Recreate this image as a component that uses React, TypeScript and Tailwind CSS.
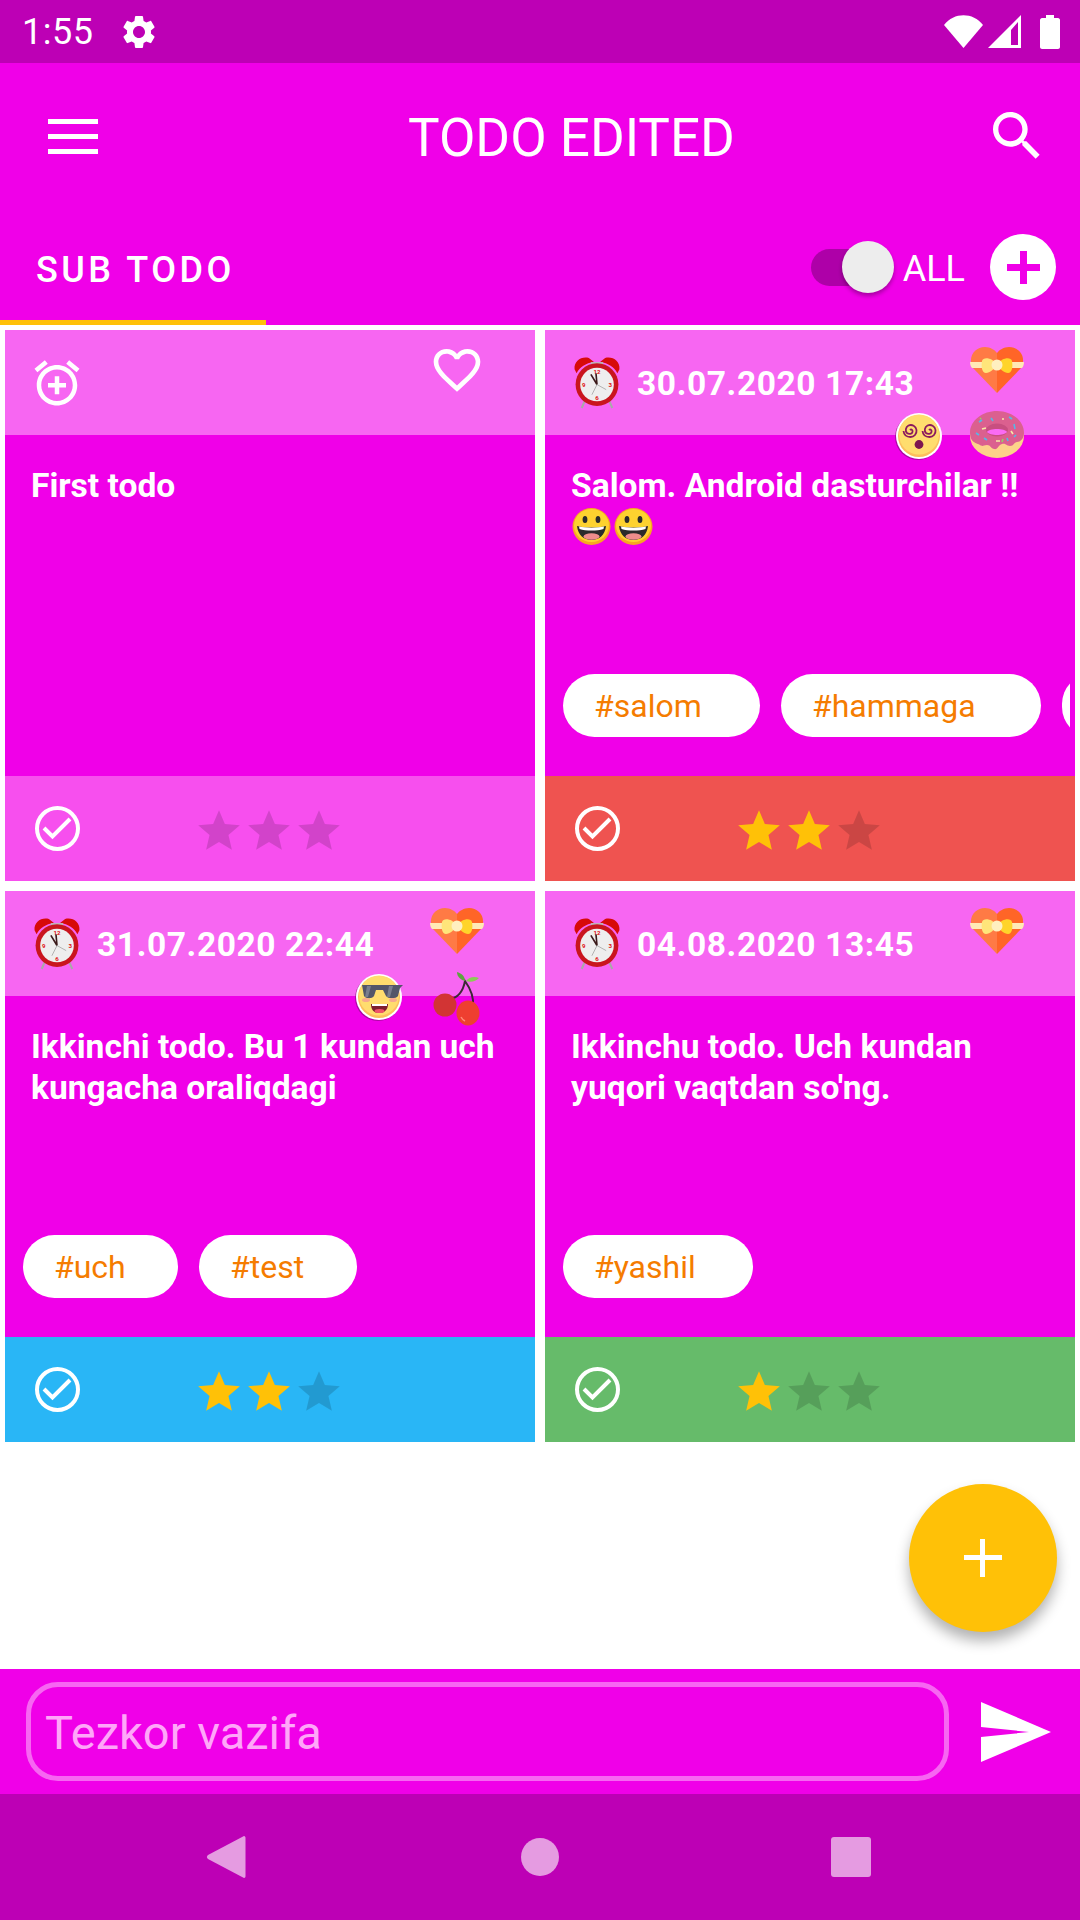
import React from "react";

const Alarm = () => (
  <svg width="48" height="53" viewBox="0 0 46 52" className="shrink-0">
    <path d="M1 13C0 5 8 0 15 2L20 6C12 7 6 11 3 17Z" fill="#D70A0A" />
    <path d="M45 13C46 5 38 0 31 2L26 6C34 7 40 11 43 17Z" fill="#D70A0A" />
    <path d="M17 6H29V9H17Z" fill="#B9B9B9" />
    <path d="M11 44L8 51M35 44L38 51" stroke="#A9A9A9" strokeWidth="2" />
    <circle cx="23" cy="28" r="21" fill="#C9151E" />
    <circle cx="23" cy="28" r="16.5" fill="#EEEEEE" />
    <text x="23" y="18" fontSize="6" fontWeight="700" fill="#E01010" textAnchor="middle" fontFamily="Roboto">12</text>
    <text x="36" y="30" fontSize="6" fontWeight="700" fill="#E01010" textAnchor="middle" fontFamily="Roboto">3</text>
    <text x="23" y="43" fontSize="6" fontWeight="700" fill="#E01010" textAnchor="middle" fontFamily="Roboto">6</text>
    <text x="10" y="30" fontSize="6" fontWeight="700" fill="#E01010" textAnchor="middle" fontFamily="Roboto">9</text>
    <path d="M23 28L17 18M23 28L22 17" stroke="#3A1A1A" strokeWidth="1.6" />
    <path d="M23 28L32 33M23 28L18 38" stroke="#999999" strokeWidth="0.7" />
  </svg>
);

const GiftHeart = () => (
  <svg width="54" height="46" viewBox="0 0 54 46">
    <path d="M27 46L3 21C-3 10 5 0 15 0C20 0 25 3 27 6Z" fill="#FF7A45" />
    <path d="M27 46L51 21C57 10 49 0 39 0C34 0 29 3 27 6Z" fill="#FF6527" />
    <path d="M0 15H54C54 18 53 20 52 21H2C1 20 0 18 0 15Z" fill="#FFE9B5" />
    <path d="M27 18C22 10 13 10 12 14C11 20 12 26 16 26C20 26 24 22 27 18Z" fill="#FFE57A" />
    <path d="M27 18C32 10 41 10 42 14C43 20 42 26 38 26C34 26 30 22 27 18Z" fill="#FFD42A" />
    <circle cx="27" cy="18" r="5.5" fill="#FFF0C0" />
  </svg>
);

const Donut = () => (
  <svg width="54" height="47" viewBox="0 0 54 47">
    <ellipse cx="27" cy="25" rx="27" ry="22" fill="#FDD28A" />
    <path d="M0 22C0 9 13 0 27 0S54 9 54 22C54 28 50 31 47 31C44 31 44 35 40 35C36 35 36 32 32 33C28 34 28 39 24 38C20 37 21 34 17 34C13 34 13 36 10 34C7 32 0 32 0 22Z" fill="#DB608F" />
    <ellipse cx="27" cy="19" rx="11" ry="6.5" fill="#C84F80" />
    <path d="M17 21C19 17 35 17 37 21C34 25 20 25 17 21Z" fill="#FA6BF4" />
    <path d="M21 7l2 3M39 6l3 2M44 13l1 5M9 11l3-2M6 22l3 2M14 27l3 2M37 27l1 3M46 24l-2 2" stroke="#54B8E8" strokeWidth="1.6" />
    <path d="M12 18l4-1M32 8l2 0M41 20l2 3M26 30l4 0" stroke="#F7E9A6" strokeWidth="1.6" />
    <path d="M33 28l-1 3M11 7l-1 1" stroke="#93D167" strokeWidth="1.6" />
  </svg>
);

const Cherry = () => (
  <svg width="48" height="54" viewBox="0 0 48 54" className="ml-[3px]">
    <path d="M17 27C24 26 30 20 32 9C37 16 41 24 40 34" fill="none" stroke="#3C2A35" strokeWidth="2" />
    <path d="M32 9C28 8 24 5 24 0C28 1 32 4 32 9Z" fill="#5DA43E" />
    <path d="M33 9C36 5 41 4 46 6C43 9 38 11 33 9Z" fill="#8ACB55" />
    <circle cx="12" cy="33" r="11.5" fill="#D23434" />
    <ellipse cx="35" cy="41" rx="11.5" ry="12.5" fill="#EE3F30" />
    <path d="M28 45C29 47 30 48 32 49" stroke="#FF8A75" strokeWidth="1.5" fill="none" />
  </svg>
);

const FaceBase = ({ children }: { children: React.ReactNode }) => (
  <svg width="48" height="48" viewBox="0 0 48 48">
    <circle cx="23" cy="25" r="23" fill="#7A0A70" opacity="0.55" />
    <circle cx="24" cy="24" r="23" fill="#FFFFFF" />
    <circle cx="24" cy="24" r="21" fill="#FDBF5C" />
    <circle cx="24" cy="22.5" r="20" fill="#FFDD6E" />
    {children}
  </svg>
);

const Spiral = ({ x, y }: { x: number; y: number }) => (
  <g transform={`translate(${x} ${y})`} fill="none" stroke="#8B1A5E" strokeWidth="1.8">
    <path d="M0 0C1.5-1.5 3 .5 2.5 2C2 4-1 4.5-3 3C-5 1-4.5-3-1.5-4.5C2-6 6-4 6.5 0C7 4 4 7 .5 7C-3 7-6 5-6.5 1" />
  </g>
);

const DizzyFace = () => (
  <FaceBase>
    <Spiral x={15} y={18} />
    <Spiral x={34} y={18} />
    <circle cx="24" cy="32.5" r="4.4" fill="#7D1650" />
  </FaceBase>
);

const CoolFace = () => (
  <FaceBase>
    <path d="M7 12H48L45 15L43 23C41 26 33 26 31 23L28 17H21L19 23C17 26 11 26 9 23Z" fill="#535669" />
    <path d="M12 13H16L13 24H10ZM34 13H38L35 24H32Z" fill="#7A7D8E" />
    <ellipse cx="11" cy="27" rx="4" ry="2" fill="#F7A98E" />
    <ellipse cx="38" cy="27" rx="4" ry="2" fill="#F7A98E" />
    <path d="M16 31H33C33 37 29 40 24 40S16 37 16 31Z" fill="#7D1E2E" />
    <path d="M17 31H32V33H17Z" fill="#FFFFFF" />
    <ellipse cx="24.5" cy="38" rx="5" ry="2" fill="#F0526A" />
  </FaceBase>
);

const Smiley = () => (
  <svg width="39" height="37" viewBox="0 0 39 37">
    <ellipse cx="19.5" cy="18.5" rx="19" ry="18.5" fill="#F6A623" />
    <ellipse cx="19.5" cy="17.5" rx="17.5" ry="16.5" fill="#FDD22F" />
    <ellipse cx="13" cy="11.5" rx="2.4" ry="3.6" fill="#2B2B2B" />
    <ellipse cx="26" cy="11.5" rx="2.4" ry="3.6" fill="#2B2B2B" />
    <path d="M5 18C14 20 25 20 34 18C33 27 27 32 19.5 32S6 27 5 18Z" fill="#2B2B2B" />
    <path d="M7 18.5C14 20 25 20 32 18.5L31.5 21C25 23 14 23 7.5 21Z" fill="#FFFFFF" />
    <ellipse cx="19.5" cy="28.5" rx="8" ry="3.2" fill="#EE8C8C" />
  </svg>
);

const CheckCircle = () => (
  <svg width="45" height="45" viewBox="0 0 45 45" className="shrink-0">
    <circle cx="22.5" cy="22.5" r="20.5" fill="none" stroke="#FFFFFF" strokeWidth="4" />
    <path d="M9 22L17.5 30.5L35 13" fill="none" stroke="#FFFFFF" strokeWidth="4" />
  </svg>
);

const Star = ({ filled }: { filled: boolean }) => (
  <svg width="50" height="50" viewBox="0 0 24 24" className={filled ? "text-[#FFC107]" : "text-black/15"}>
    <path fill="currentColor" d="M12 17.27L18.18 21l-1.64-7.03L22 9.24l-7.19-.61L12 2 9.19 8.63 2 9.24l5.46 4.73L5.82 21z" />
  </svg>
);

const AlarmAdd = () => (
  <svg width="54" height="54" viewBox="0 0 24 24" className="shrink-0 ml-[-3px] text-white">
    <path fill="currentColor" d="M7.88 3.39L6.6 1.86 2 5.71l1.29 1.53 4.59-3.85zM22 5.72l-4.6-3.86-1.29 1.53 4.6 3.86L22 5.72zM12 4c-4.97 0-9 4.03-9 9s4.03 9 9 9 9-4.03 9-9-4.03-9-9-9zm0 16c-3.86 0-7-3.14-7-7s3.14-7 7-7 7 3.14 7 7-3.14 7-7 7zm1-11h-2v3H8v2h3v3h2v-3h3v-2h-3V9z" />
  </svg>
);

const HeartOutline = () => (
  <svg width="56" height="56" viewBox="0 0 24 24" className="ml-[-1px] text-white">
    <path fill="currentColor" d="M16.5 3c-1.74 0-3.41.81-4.5 2.09C10.91 3.81 9.24 3 7.5 3 4.42 3 2 5.42 2 8.5c0 3.78 3.4 6.86 8.55 11.54L12 21.35l1.45-1.32C18.6 15.36 22 12.28 22 8.5 22 5.42 19.58 3 16.5 3zm-4.4 15.55l-.1.1-.1-.1C7.14 14.24 4 11.39 4 8.5 4 6.5 5.5 5 7.5 5c1.54 0 3.04.99 3.57 2.36h1.87C13.46 5.99 14.96 5 16.5 5c2 0 3.5 1.5 3.5 3.5 0 2.89-3.14 5.74-7.9 10.05z" />
  </svg>
);

const Chip = ({ label, width }: { label: string; width: string }) => (
  <div className={`h-[63px] shrink-0 rounded-full bg-white pl-[31px] flex items-center text-[32px] text-[#F57C00] ${width}`}>
    {label}
  </div>
);

interface CardProps {
  date?: string;
  title: React.ReactNode;
  stars: number;
  footer: string;
  chips?: React.ReactNode;
  face?: React.ReactNode;
  sticker?: React.ReactNode;
}

const TodoCard = ({ date, title, stars, footer, chips, face, sticker }: CardProps) => (
  <div className="relative h-[551px] flex flex-col">
    <div className="h-[105px] bg-[#F766F2] flex items-center pl-[28px] relative">
      {date ? (
        <>
          <div className="mt-[-1px]"><Alarm /></div>
          <span className="ml-[16px] mt-[4px] text-[33.5px] font-bold tracking-[0.6px] text-white">{date}</span>
        </>
      ) : (
        <AlarmAdd />
      )}
    </div>
    <div className="flex-1 bg-[#F000E8] flex flex-col min-h-0 pl-[26px] pr-[20px] pt-[31px] pb-[39px]">
      <div className="text-[33.6px] leading-[40.5px] font-bold text-white">{title}</div>
      {chips && <div className="mt-auto ml-[-8px] mr-[-15px] overflow-hidden flex gap-[21px]">{chips}</div>}
    </div>
    <div className={`h-[105px] flex items-center pl-[30px] ${footer}`}>
      <CheckCircle />
      <div className="ml-[114px] mt-[5px] flex">
        {[0, 1, 2].map((i) => (
          <Star key={i} filled={i < stars} />
        ))}
      </div>
    </div>
    {/* stickers sit across the header edge */}
    {date && <div className="absolute left-[425px] top-[17px]"><GiftHeart /></div>}
    {!date && <div className="absolute left-[425px] top-[12px]"><HeartOutline /></div>}
    {face && <div className="absolute left-[350px] top-[82px]">{face}</div>}
    {sticker && <div className="absolute left-[425px] top-[81px]">{sticker}</div>}
  </div>
);

export default function App() {
  return (
    <div className="relative w-[1080px] h-[1920px] flex flex-col bg-white overflow-hidden font-['Roboto',sans-serif]">
      {/* status bar */}
      <div className="h-[63px] bg-[#BD00B5] flex items-center text-white pl-[22px] pr-[20px]">
        <span className="text-[36px] tracking-[0.5px]">1:55</span>
        <svg width="40" height="40" viewBox="0 0 24 24" className="ml-[26px] text-white">
          <path fill="currentColor" d="M19.14 12.94c.04-.3.06-.61.06-.94 0-.32-.02-.64-.07-.94l2.03-1.58c.18-.14.23-.41.12-.61l-1.92-3.32c-.12-.22-.37-.29-.59-.22l-2.39.96c-.5-.38-1.03-.7-1.62-.94l-.36-2.54c-.04-.24-.24-.41-.48-.41h-3.84c-.24 0-.43.17-.47.41l-.36 2.54c-.59.24-1.13.57-1.62.94l-2.39-.96c-.22-.08-.47 0-.59.22L2.74 8.87c-.12.21-.08.47.12.61l2.03 1.58c-.05.3-.09.63-.09.94s.02.64.07.94l-2.03 1.58c-.18.14-.23.41-.12.61l1.92 3.32c.12.22.37.29.59.22l2.39-.96c.5.38 1.03.7 1.62.94l.36 2.54c.05.24.24.41.48.41h3.84c.24 0 .44-.17.47-.41l.36-2.54c.59-.24 1.13-.56 1.62-.94l2.39.96c.22.08.47 0 .59-.22l1.92-3.32c.12-.22.07-.47-.12-.61l-2.01-1.58zM12 15.6c-1.98 0-3.6-1.62-3.6-3.6s1.62-3.6 3.6-3.6 3.6 1.62 3.6 3.6-1.62 3.6-3.6 3.6z" />
        </svg>
        <div className="ml-auto flex items-center">
          <svg width="39" height="33" viewBox="0 0 39 33">
            <path d="M0 10C10 -3 29 -3 39 10L19.5 33Z" fill="#FFFFFF" />
          </svg>
          <svg width="33" height="33" viewBox="0 0 33 33" className="ml-[5px]">
            <path d="M33 0V33H0Z" fill="#FFFFFF" />
            <path d="M23 15V30H30V7Z" fill="#BD00B5" />
          </svg>
          <svg width="20" height="34" viewBox="0 0 20 34" className="ml-[19px]">
            <path d="M6 0H14V3H18C19 3 20 4 20 5V32C20 33 19 34 18 34H2C1 34 0 33 0 32V5C0 4 1 3 2 3H6Z" fill="#FFFFFF" />
          </svg>
        </div>
      </div>

      {/* app bar */}
      <div className="h-[262px] bg-[#F000E8] flex flex-col text-white">
        <div className="h-[146px] flex items-center relative">
          <div className="ml-[48px] w-[50px] flex flex-col gap-[10px]">
            <div className="h-[5px] bg-white" />
            <div className="h-[5px] bg-white" />
            <div className="h-[5px] bg-white" />
          </div>
          <div className="ml-[310px] mt-[4px] text-[53px] leading-none">TODO EDITED</div>
          <svg width="64" height="64" viewBox="0 0 24 24" className="ml-auto mr-[31px] text-white">
            <path fill="currentColor" d="M15.5 14h-.79l-.28-.27C15.41 12.59 16 11.11 16 9.5 16 5.91 13.09 3 9.5 3S3 5.91 3 9.5 5.91 16 9.5 16c1.61 0 3.09-.59 4.23-1.57l.27.28v.79l5 4.99L20.49 19l-4.99-5zm-6 0C7.01 14 5 11.99 5 9.5S7.01 5 9.5 5 14 7.01 14 9.5 11.99 14 9.5 14z" />
          </svg>
        </div>
        <div className="flex-1 flex items-center">
          <div className="ml-[36px] mt-[5px] text-[36px] font-medium tracking-[3.5px]">SUB TODO</div>
          <div className="ml-auto flex items-center">
            <div className="relative w-[83px] h-[52px] flex items-center">
              <div className="w-[60px] h-[37px] rounded-full bg-[#AE00A8]" />
              <div className="absolute right-0 top-0 w-[52px] h-[52px] rounded-full bg-[#EDEDED] shadow-[0_3px_4px_rgba(0,0,0,0.3)]" />
            </div>
            <span className="ml-[9px] mt-[3px] text-[36px]">ALL</span>
            <div className="ml-[25px] mr-[24px] w-[66px] h-[66px] rounded-full bg-white flex items-center justify-center">
              <div className="relative w-[33px] h-[33px]">
                <div className="absolute left-0 top-[13px] w-[33px] h-[7px] bg-[#F000E8]" />
                <div className="absolute left-[13px] top-0 w-[7px] h-[33px] bg-[#F000E8]" />
              </div>
            </div>
          </div>
        </div>
      </div>
      <div className="h-[5px] mt-[-5px] relative">
        <div className="h-[5px] w-[266px] bg-[#FFC107]" />
      </div>

      {/* cards */}
      <div className="flex-1 min-h-0 pt-[5px] px-[5px]">
        <div className="grid grid-cols-2 gap-[10px]">
          <TodoCard title="First todo" stars={0} footer="bg-[#F74FEE]" />
          <TodoCard
            date="30.07.2020 17:43"
            title={
              <>
                Salom. Android dasturchilar !!
                <div className="flex gap-[3px] mt-[1px] ml-[1px]">
                  <Smiley />
                  <Smiley />
                </div>
              </>
            }
            stars={2}
            footer="bg-[#EF5350]"
            face={<DizzyFace />}
            sticker={<Donut />}
            chips={
              <>
                <Chip label="#salom" width="w-[197px]" />
                <Chip label="#hammaga" width="w-[260px]" />
                <Chip label="" width="w-[60px]" />
              </>
            }
          />
          <TodoCard
            date="31.07.2020 22:44"
            title="Ikkinchi todo. Bu 1 kundan uch kungacha oraliqdagi"
            stars={2}
            footer="bg-[#29B6F6]"
            face={<CoolFace />}
            sticker={<Cherry />}
            chips={
              <>
                <Chip label="#uch" width="w-[155px]" />
                <Chip label="#test" width="w-[158px]" />
              </>
            }
          />
          <TodoCard
            date="04.08.2020 13:45"
            title="Ikkinchu todo. Uch kundan yuqori vaqtdan so'ng."
            stars={1}
            footer="bg-[#66BB6A]"
            chips={<Chip label="#yashil" width="w-[190px]" />}
          />
        </div>
      </div>

      {/* quick task input */}
      <div className="h-[125px] bg-[#F000E8] flex items-center pl-[26px]">
        <div className="w-[923px] h-[99px] rounded-[32px] border-[5px] border-[#F766F2] flex items-center pl-[14px] pt-[3px] text-[47px] text-[#FFA6F9]">
          Tezkor vazifa
        </div>
        <svg width="70" height="60" viewBox="0 0 70 60" className="ml-[32px]">
          <path d="M0 0L70 30L0 60V35L48 30L0 25Z" fill="#FFFFFF" />
        </svg>
      </div>

      {/* nav bar */}
      <div className="h-[126px] bg-[#BD00B5] flex items-center pb-[1px]">
        <svg width="40" height="44" viewBox="0 0 40 44" className="ml-[206px]">
          <path d="M38 1C39 1 39.5 2 39.5 3V41C39.5 42 39 43 38 43L2 24C0.5 23 0.5 21 2 20Z" fill="#E59BE1" />
        </svg>
        <div className="ml-[275px] w-[38px] h-[38px] rounded-full bg-[#E59BE1]" />
        <div className="ml-[272px] w-[40px] h-[40px] rounded-[3px] bg-[#E59BE1]" />
      </div>

      {/* FAB */}
      <div className="absolute left-[909px] top-[1484px] w-[148px] h-[148px] rounded-full bg-[#FFC107] shadow-[0_9px_14px_rgba(0,0,0,0.3)] flex items-center justify-center">
        <div className="relative w-[38px] h-[38px]">
          <div className="absolute left-0 top-[16px] w-[38px] h-[5px] bg-white" />
          <div className="absolute left-[16px] top-0 w-[5px] h-[38px] bg-white" />
        </div>
      </div>
    </div>
  );
}
